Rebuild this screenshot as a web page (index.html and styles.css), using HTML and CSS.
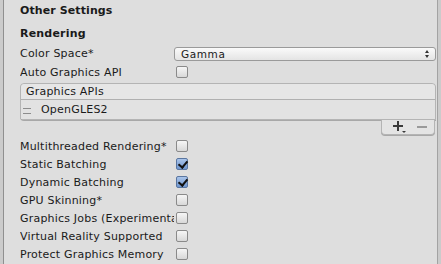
FILE: index.html
```html
<!DOCTYPE html>
<html lang="en">
<head>
  <meta charset="UTF-8">
  <title>Player Settings</title>
  <link rel="stylesheet" href="styles.css">
</head>
<body>

<div class="inspector">
  <div class="panel">
    <div class="section-title">Other Settings</div>
    <div class="group-title">Rendering</div>

    <div class="row row-tall">
      <div class="label">Color Space*</div>
      <div class="dropdown">
        <span>Gamma</span>
        <span class="arrows"></span>
      </div>
    </div>
    <div class="row">
      <div class="label">Auto Graphics API</div>
      <div class="checkbox"></div>
    </div>

    <!-- Graphics APIs reorderable list -->
    <div class="list">
      <div class="list-header">Graphics APIs</div>
      <div class="list-item">
        <span class="handle"></span>
        <span>OpenGLES2</span>
      </div>
    </div>
    <div class="list-footer">
      <span class="btn-add">
        <svg width="14" height="12" viewBox="0 0 14 12">
          <rect x="0" y="4" width="10" height="2" fill="#3a3a3a"/>
          <rect x="4" y="0" width="2" height="10" fill="#3a3a3a"/>
          <path d="M9 10 h4 l-2 2 z" fill="#3a3a3a"/>
        </svg>
      </span>
      <span class="btn-remove">
        <svg width="12" height="12" viewBox="0 0 12 12">
          <rect x="1" y="5" width="10" height="2" fill="#9a9a9a"/>
        </svg>
      </span>
    </div>

    <div class="row first-after-list">
      <div class="label">Multithreaded Rendering*</div>
      <div class="checkbox"></div>
    </div>
    <div class="row">
      <div class="label">Static Batching</div>
      <div class="checkbox checked"></div>
    </div>
    <div class="row">
      <div class="label">Dynamic Batching</div>
      <div class="checkbox checked"></div>
    </div>
    <div class="row">
      <div class="label">GPU Skinning*</div>
      <div class="checkbox"></div>
    </div>
    <div class="row">
      <div class="label">Graphics Jobs (Experimental)*</div>
      <div class="checkbox"></div>
    </div>
    <div class="row">
      <div class="label">Virtual Reality Supported</div>
      <div class="checkbox"></div>
    </div>
    <div class="row">
      <div class="label">Protect Graphics Memory</div>
      <div class="checkbox"></div>
    </div>
  </div>
</div>

</body>
</html>
```

FILE: styles.css
```css
body {
  margin: 0;
  padding: 0;
  font-family: "DejaVu Sans", Verdana, sans-serif;
  font-size: 11px;
  color: #1a1a1a;
  background-color: #cbcbcb;
  overflow: hidden;
}
.inspector {
  width: 441px;
  height: 264px;
  display: flex;
  box-sizing: border-box;
  padding-left: 3px;
  padding-right: 3px;
}
.panel {
  flex-grow: 1;
  background-color: #dedede;
  border-left: 1px solid #8f8f8f;
  border-right: 1px solid #a3a3a3;
  display: flex;
  flex-direction: column;
  padding-left: 16px;
  padding-right: 1px;
}
.section-title {
  font-weight: bold;
  height: 22px;
  line-height: 22px;
  letter-spacing: 0.1px;
}
.group-title {
  font-weight: bold;
  height: 18px;
  line-height: 18px;
  margin-top: 3px;
  margin-bottom: 1px;
  letter-spacing: 0.2px;
}
.row {
  display: flex;
  align-items: center;
  height: 18px;
}
.row-tall {
  height: 19px;
}
.label {
  width: 154px;
  white-space: nowrap;
  overflow: hidden;
  flex-shrink: 0;
  letter-spacing: 0.2px;
}
.dropdown {
  flex-grow: 1;
  height: 14px;
  box-sizing: border-box;
  border: 1px solid #9a9a9a;
  border-radius: 3px;
  background: linear-gradient(#fafafa, #e4e4e4);
  display: flex;
  align-items: center;
  justify-content: space-between;
  padding: 0 5px 0 6px;
  font-size: 10.5px;
  letter-spacing: 0.6px;
}
.arrows {
  width: 5px;
  height: 8px;
  position: relative;
}
.arrows::before,
.arrows::after {
  content: "";
  position: absolute;
  left: 0;
  border-left: 2.5px solid transparent;
  border-right: 2.5px solid transparent;
}
.arrows::before {
  top: 0;
  border-bottom: 3px solid #333;
}
.arrows::after {
  bottom: 0;
  border-top: 3px solid #333;
}
.checkbox {
  width: 12px;
  height: 12px;
  box-sizing: border-box;
  margin-left: 2px;
  border: 1px solid #8a8a8a;
  border-radius: 2px;
  background: linear-gradient(#f6f6f6, #d8d8d8);
  position: relative;
}
.checkbox.checked {
  background: linear-gradient(#a9c4ea, #6f96cf);
  border-color: #5a76a0;
}
.checkbox.checked::after {
  content: "";
  position: absolute;
  left: 3px;
  top: 0px;
  width: 4px;
  height: 7px;
  border-right: 2px solid #111;
  border-bottom: 2px solid #111;
  transform: rotate(40deg);
}
.list {
  margin-top: 2px;
  border: 1px solid #b4b4b4;
  border-radius: 4px 4px 0 4px;
  background-color: #e4e4e4;
  box-shadow: 0 1px 0 #a8a8a8;
}
.list-header {
  height: 15px;
  line-height: 15px;
  padding-left: 5px;
  border-bottom: 1px solid #b0b0b0;
  background-color: #e6e6e6;
  border-radius: 4px 4px 0 0;
  letter-spacing: 0.2px;
}
.list-item {
  height: 19px;
  display: flex;
  align-items: center;
  padding-left: 2px;
  background-color: #e2e2e2;
  letter-spacing: 0.2px;
}
.handle {
  width: 8px;
  height: 4px;
  border-top: 1px solid #8c8c8c;
  border-bottom: 1px solid #8c8c8c;
  margin-right: 10px;
  margin-top: 2px;
}
.list-footer {
  align-self: flex-end;
  width: 54px;
  height: 15px;
  box-sizing: border-box;
  margin-right: 1px;
  padding: 0 6px 0 11px;
  border: 1px solid #b4b4b4;
  border-top: none;
  border-radius: 0 0 4px 4px;
  background-color: #e4e4e4;
  box-shadow: 0 1px 0 #a8a8a8;
  display: flex;
  align-items: center;
  justify-content: space-between;
}
.btn-add,
.btn-remove {
  display: flex;
}
.first-after-list {
  margin-top: 2px;
}
```
